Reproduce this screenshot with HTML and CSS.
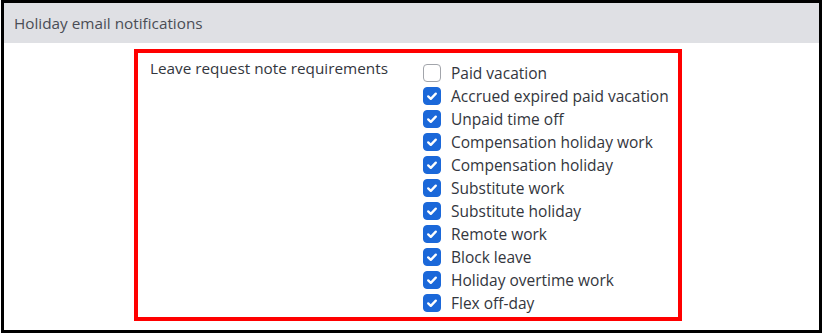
FILE: index.html
```html
<!DOCTYPE html>
<html lang="en">
<head>
    <meta charset="UTF-8">
    <title>Holiday email notifications</title>
    <link rel="stylesheet" href="styles.css">
</head>
<body>
    <div class="panel">
        <div class="panel-header">Holiday email notifications</div>
        <div class="panel-body">
            <div class="highlight">
                <div class="field-label">Leave request note requirements</div>
                <ul class="check-list">
                    <li><span class="box"></span>Paid vacation</li>
                    <li><span class="box checked"><svg viewBox="0 0 16 16"><path d="M4.2 8.4l2.6 2.5L11.8 5.6"/></svg></span>Accrued expired paid vacation</li>
                    <li><span class="box checked"><svg viewBox="0 0 16 16"><path d="M4.2 8.4l2.6 2.5L11.8 5.6"/></svg></span>Unpaid time off</li>
                    <li><span class="box checked"><svg viewBox="0 0 16 16"><path d="M4.2 8.4l2.6 2.5L11.8 5.6"/></svg></span>Compensation holiday work</li>
                    <li><span class="box checked"><svg viewBox="0 0 16 16"><path d="M4.2 8.4l2.6 2.5L11.8 5.6"/></svg></span>Compensation holiday</li>
                    <li><span class="box checked"><svg viewBox="0 0 16 16"><path d="M4.2 8.4l2.6 2.5L11.8 5.6"/></svg></span>Substitute work</li>
                    <li><span class="box checked"><svg viewBox="0 0 16 16"><path d="M4.2 8.4l2.6 2.5L11.8 5.6"/></svg></span>Substitute holiday</li>
                    <li><span class="box checked"><svg viewBox="0 0 16 16"><path d="M4.2 8.4l2.6 2.5L11.8 5.6"/></svg></span>Remote work</li>
                    <li><span class="box checked"><svg viewBox="0 0 16 16"><path d="M4.2 8.4l2.6 2.5L11.8 5.6"/></svg></span>Block leave</li>
                    <li><span class="box checked"><svg viewBox="0 0 16 16"><path d="M4.2 8.4l2.6 2.5L11.8 5.6"/></svg></span>Holiday overtime work</li>
                    <li><span class="box checked"><svg viewBox="0 0 16 16"><path d="M4.2 8.4l2.6 2.5L11.8 5.6"/></svg></span>Flex off-day</li>
                </ul>
            </div>
        </div>
    </div>
</body>
</html>
```

FILE: styles.css
```css
body {
    margin: 0;
    background: #fff;
    font-family: 'Open Sans', 'Liberation Sans', sans-serif;
    color: #33363d;
}
.panel {
    margin: 0 1px;
    height: 327px;
    border: 3px solid #000;
}
.panel-header {
    height: 40px;
    line-height: 40px;
    padding-left: 10px;
    background: #dfe0e4;
    font-size: 15.3px;
    color: #4a4d55;
}
.panel-body {
    padding: 6px 0 0 130px;
}
.highlight {
    width: 540px;
    height: 264px;
    border: 4px solid #ff0000;
    display: flex;
}
.field-label {
    width: 273px;
    padding: 5px 0 0 12px;
    font-size: 15.3px;
    line-height: 20px;
}
.check-list {
    list-style: none;
    margin: 0;
    padding: 8px 0 0 0;
}
.check-list li {
    display: flex;
    align-items: center;
    height: 23px;
    font-size: 15.5px;
}
.box {
    width: 16px;
    height: 16px;
    margin-right: 10px;
    border: 1px solid #a2a5ab;
    border-radius: 4px;
    background: #fff;
    display: flex;
}
.box.checked {
    background: #1b68d9;
    border-color: #1b68d9;
}
.box svg {
    width: 16px;
    height: 16px;
    fill: none;
    stroke: #fff;
    stroke-width: 2.3;
    stroke-linecap: round;
    stroke-linejoin: round;
}
```
